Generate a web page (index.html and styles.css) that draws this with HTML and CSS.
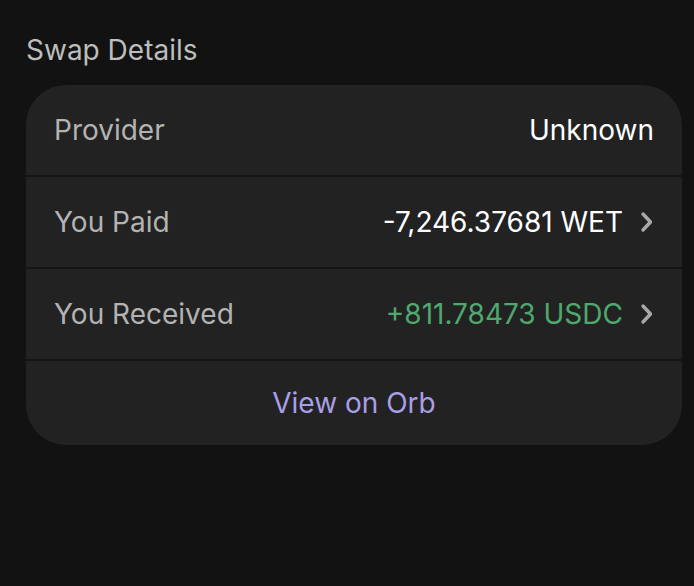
FILE: index.html
```html
<!DOCTYPE html>
<html>
<head>
<meta charset="utf-8">
<link rel="stylesheet" href="styles.css">
</head>
<body>
<div class="page">
  <h2 class="title">Swap Details</h2>
  <div class="card">
    <div class="row">
      <span class="label">Provider</span>
      <span class="value">Unknown</span>
    </div>
    <div class="row">
      <span class="label">You Paid</span>
      <span class="value">-7,246.37681 WET<svg class="chev" width="14" height="22" viewBox="0 0 14 22"><path d="M3 3 L10.5 11 L3 19" fill="none" stroke="#a8a8a8" stroke-width="3.4" stroke-linecap="round" stroke-linejoin="round"/></svg></span>
    </div>
    <div class="row">
      <span class="label">You Received</span>
      <span class="value green">+811.78473 USDC<svg class="chev" width="14" height="22" viewBox="0 0 14 22"><path d="M3 3 L10.5 11 L3 19" fill="none" stroke="#a8a8a8" stroke-width="3.4" stroke-linecap="round" stroke-linejoin="round"/></svg></span>
    </div>
    <div class="row link-row">
      <span class="link">View on Orb</span>
    </div>
  </div>
</div>
</body>
</html>
```
FILE: styles.css
```css
html, body {
  margin: 0;
  padding: 0;
  background: #121212;
}
body {
  font-family: Inter, "Noto Sans", sans-serif;
  width: 694px;
  height: 586px;
  overflow: hidden;
}
.page {
  padding: 34px 12px 0 26px;
}
.title {
  margin: 0 0 19px 0;
  font-size: 28px;
  font-weight: 400;
  color: #bdbdbd;
  line-height: 32px;
}
.card {
  background: #222222;
  border-radius: 40px;
  overflow: hidden;
}
.row {
  height: 90px;
  display: flex;
  align-items: center;
  justify-content: space-between;
  padding: 0 28px 0 28px;
  border-bottom: 2px solid #151515;
}
.row:last-child {
  border-bottom: none;
  height: 84px;
}
.label,
.value,
.link {
  font-size: 28px;
}
.label {
  color: #b3b3b3;
}
.value {
  color: #ffffff;
  display: flex;
  align-items: center;
}
.value.green {
  color: #4fa86d;
}
.chev {
  margin-left: 17px;
}
.link-row {
  justify-content: center;
}
.link {
  color: #a99ee8;
}
```
